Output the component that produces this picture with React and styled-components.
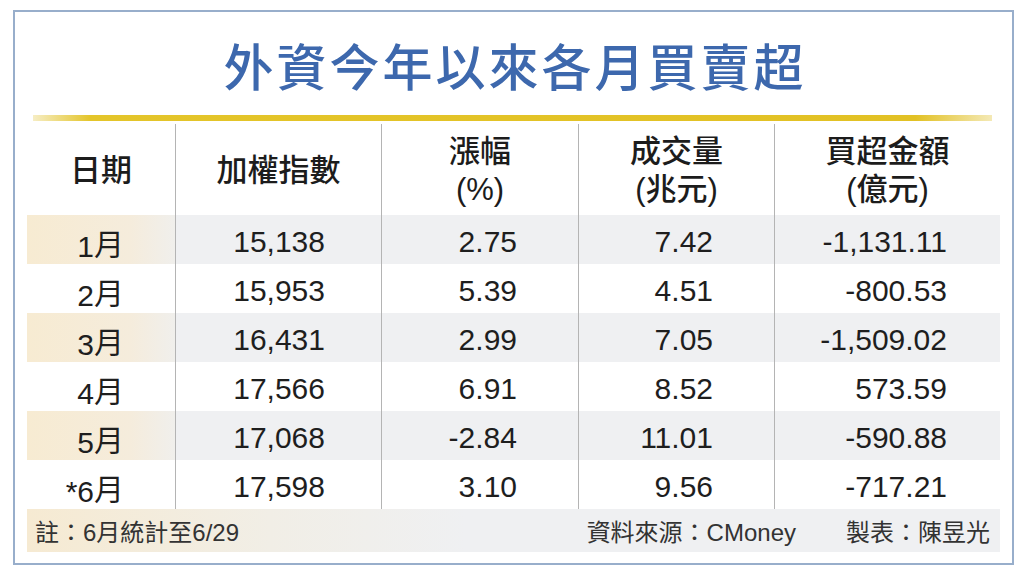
import styled, { createGlobalStyle } from 'styled-components';

const GlobalStyle = createGlobalStyle`
  html, body {
    margin: 0;
    padding: 0;
    background: #fff;
  }
  * {
    box-sizing: border-box;
  }
`

const Frame = styled.div`
  width: 1001px;
  height: 555px;
  margin: 10px 0 0 13px;
  padding: 0 12px 11px 12px;
  border: 2px solid #98aecb;
  background: #fff;
  display: flex;
  flex-direction: column;
  font-family: "Liberation Sans", "Noto Sans CJK TC", sans-serif;
`

const Title = styled.h1`
  margin: 0;
  height: 103px;
  padding: 0 0 0 3px;
  display: flex;
  align-items: center;
  justify-content: center;
  color: #3d68ad;
  font-family: "Noto Sans CJK TC", sans-serif;
  font-weight: 500;
  font-size: 50px;
  letter-spacing: 3px;
`

const GoldLine = styled.div`
  height: 6px;
  margin: 0 8px 3px 6px;
  background: linear-gradient(to right, #f6edc4 0%, #e4c52a 6%, #e2c124 92%, #f4e9b6 100%);
`

const Table = styled.div`
  display: grid;
  grid-template-columns: 148px 206px 197px 196px 226px;
  grid-template-rows: 91px repeat(6, 49px);
`

const HeadCell = styled.div`
  display: flex;
  flex-direction: column;
  align-items: center;
  justify-content: center;
  padding-top: 2px;
  font-family: "Liberation Sans", "Noto Sans CJK TC", sans-serif;
  font-weight: 500;
  font-size: 31px;
  line-height: 38px;
  color: #1c1c1c;
  border-left: ${({ first }) => first ? 'none' : '1.5px solid #b4b4b4'};
`

const Cell = styled.div`
  display: flex;
  align-items: center;
  justify-content: flex-end;
  padding: 4px ${({ pr }) => pr}px 0 0;
  font-size: 30px;
  color: #1e1e1e;
  border-left: ${({ first }) => first ? 'none' : '1.5px solid #b4b4b4'};
  background: ${({ shaded, first }) =>
    !shaded ? 'transparent'
      : first ? 'linear-gradient(to right, #f7ebd2 0%, #f5ecdc 70%, #f0efec 100%)'
      : '#eff0f2'};
`

const Month = styled.span`
  vertical-align: 2px;
`

const Footer = styled.div`
  height: 43px;
  display: flex;
  align-items: center;
  justify-content: space-between;
  padding: 0 10px 0 8px;
  font-size: 24px;
  color: #333;
  background: linear-gradient(to right, #f6ead2 0%, #f1eee6 25%, #eff0f2 45%, #eff0f2 100%);
`

const Credits = styled.div`
  display: flex;
  gap: 50px;
`

const headers = [
  ['日期'],
  ['加權指數'],
  ['漲幅', '(%)'],
  ['成交量', '(兆元)'],
  ['買超金額', '(億元)'],
];

const paddings = [51, 56, 61, 61, 53];

const rows = [
  ['1', '15,138', '2.75', '7.42', '-1,131.11'],
  ['2', '15,953', '5.39', '4.51', '-800.53'],
  ['3', '16,431', '2.99', '7.05', '-1,509.02'],
  ['4', '17,566', '6.91', '8.52', '573.59'],
  ['5', '17,068', '-2.84', '11.01', '-590.88'],
  ['*6', '17,598', '3.10', '9.56', '-717.21'],
];

const App = () => {
  return (
    <>
      <GlobalStyle />
      <Frame>
        <Title>外資今年以來各月買賣超</Title>
        <GoldLine />
        <Table>
          {headers.map((lines, i) => (
            <HeadCell key={i} first={i === 0}>
              {lines.map(line => <span key={line}>{line}</span>)}
            </HeadCell>
          ))}
          {rows.map((row, r) => row.map((value, c) => (
            <Cell key={`${r}-${c}`} first={c === 0} shaded={r % 2 === 0} pr={paddings[c]}>
              {c === 0 ? <span>{value}<Month>月</Month></span> : value}
            </Cell>
          )))}
        </Table>
        <Footer>
          <span>註：6月統計至6/29</span>
          <Credits>
            <span>資料來源：CMoney</span>
            <span>製表：陳昱光</span>
          </Credits>
        </Footer>
      </Frame>
    </>
  )
}

export default App;
